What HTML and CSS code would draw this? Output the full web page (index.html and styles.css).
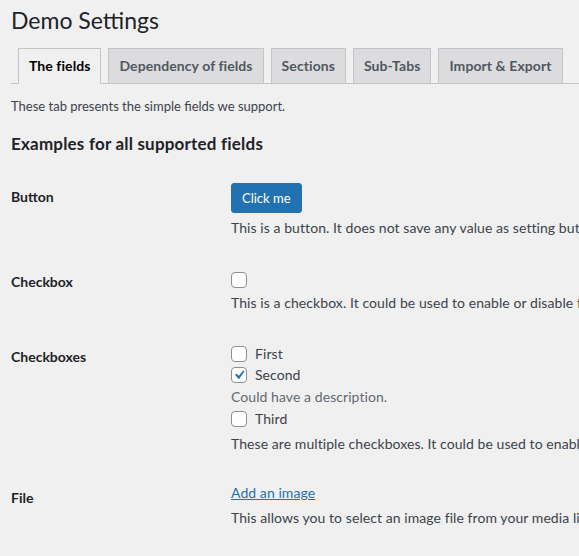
FILE: index.html
```html
<!DOCTYPE html>
<html lang="en">
<head>
<meta charset="utf-8">
<title>Demo Settings</title>
<link rel="stylesheet" href="styles.css">
</head>
<body>
<div class="wrap">
  <h1 class="page-title">Demo Settings</h1>
  <nav class="nav-tab-wrapper">
    <a class="nav-tab nav-tab-active" href="#">The fields</a>
    <a class="nav-tab" href="#">Dependency of fields</a>
    <a class="nav-tab" href="#">Sections</a>
    <a class="nav-tab" href="#">Sub-Tabs</a>
    <a class="nav-tab" href="#">Import &amp; Export</a>
  </nav>
  <p class="intro">These tab presents the simple fields we support.</p>
  <h2 class="section-title">Examples for all supported fields</h2>
  <table class="form-table">
    <tbody>
      <tr>
        <th>Button</th>
        <td>
          <button class="button-primary" type="button">Click me</button>
          <p class="field-desc">This is a button. It does not save any value as setting but can be used to trigger an action.</p>
        </td>
      </tr>
      <tr>
        <th>Checkbox</th>
        <td>
          <div class="single-check"><span class="cb"></span></div>
          <p class="field-desc">This is a checkbox. It could be used to enable or disable features.</p>
        </td>
      </tr>
      <tr>
        <th>Checkboxes</th>
        <td>
          <label class="check-line"><span class="cb"></span>First</label>
          <label class="check-line"><span class="cb cb-checked"><svg viewBox="0 0 20 20" width="18" height="18"><path d="M14.83 4.89l1.34.94-5.81 8.38H9.02L5.78 9.67l1.34-1.25 2.57 2.4z" fill="#2271b1"/></svg></span>Second</label>
          <p class="option-desc">Could have a description.</p>
          <label class="check-line"><span class="cb"></span>Third</label>
          <p class="field-desc">These are multiple checkboxes. It could be used to enable or disable several features.</p>
        </td>
      </tr>
      <tr>
        <th>File</th>
        <td class="file-cell">
          <a class="file-link" href="#">Add an image</a>
          <p class="field-desc">This allows you to select an image file from your media library.</p>
        </td>
      </tr>
    </tbody>
  </table>
</div>
</body>
</html>
```

FILE: styles.css
```css
html, body {
  margin: 0;
  padding: 0;
  overflow: hidden;
  background: #f0f0f1;
}
body {
  color: #3c434a;
  font-family: "Lato", "Open Sans", sans-serif;
  font-size: 13px;
  line-height: 1.4;
}
.wrap {
  width: 1000px;
  padding-left: 11px;
}
.page-title {
  font-size: 23px;
  font-weight: 400;
  line-height: 30px;
  margin: 0;
  padding: 5px 0 0;
  color: #1d2327;
}
.nav-tab-wrapper {
  display: flex;
  border-bottom: 1px solid #c3c4c7;
  margin-top: 13px;
}
.nav-tab {
  margin-left: 7px;
  margin-bottom: -1px;
  padding: 5px 10px;
  border: 1px solid #c3c4c7;
  background: #dcdcde;
  color: #50575e;
  font-size: 14px;
  font-weight: 700;
  line-height: 24px;
  letter-spacing: 0.08px;
  text-decoration: none;
  white-space: nowrap;
}
.nav-tab-active {
  background: #f0f0f1;
  border-bottom-color: #f0f0f1;
  color: #000;
}
.intro {
  margin: 13px 0;
}
.section-title {
  font-size: 17px;
  font-weight: 700;
  color: #1d2327;
  margin: 17px 0 0;
  line-height: 23px;
  letter-spacing: 0.2px;
}
.form-table {
  border-collapse: collapse;
  margin-top: 13px;
  font-size: 14px;
  line-height: 1.5;
}
.form-table th {
  width: 200px;
  padding: 20px 10px 20px 0;
  text-align: left;
  vertical-align: top;
  font-weight: 700;
  line-height: 1.3;
  color: #1d2327;
}
.form-table td {
  padding: 15px 10px;
  vertical-align: top;
  white-space: nowrap;
  letter-spacing: 0.07px;
}
.form-table td.file-cell {
  padding-top: 13px;
}
.button-primary {
  display: block;
  height: 30px;
  padding: 0 10px;
  border: 1px solid #2271b1;
  border-radius: 3px;
  background: #2271b1;
  color: #fff;
  font-family: inherit;
  font-size: 13px;
  line-height: 28px;
  letter-spacing: 0;
}
.field-desc {
  margin: 4px 0 0;
}
.option-desc {
  margin: 1px 0;
  color: #646970;
}
.single-check {
  height: 20px;
  padding-top: 4px;
  box-sizing: border-box;
}
.cb {
  display: inline-flex;
  align-items: center;
  justify-content: center;
  box-sizing: border-box;
  width: 16px;
  height: 16px;
  border: 1px solid #8c8f94;
  border-radius: 4px;
  background: #fff;
  vertical-align: top;
  overflow: hidden;
}
.cb svg {
  flex: none;
}
.check-line {
  display: flex;
  align-items: center;
  gap: 8px;
  height: 21px;
}
.file-link {
  color: #2271b1;
  text-decoration: underline;
}
```
